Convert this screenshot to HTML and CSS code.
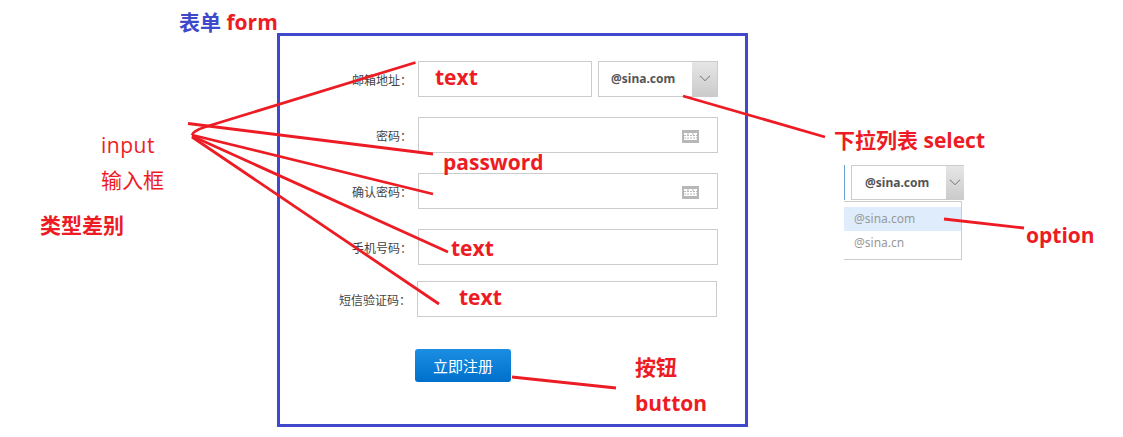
FILE: index.html
```html
<!DOCTYPE html>
<html lang="en">
<head>
  <meta charset="UTF-8">
  <meta name="viewport" content="width=device-width, initial-scale=1.0">
  <title>表单 form</title>
  <link rel="stylesheet" href="styles.css">
</head>
<body>
  <div class="page">
    <!-- the annotated form -->
    <form class="frame">
      <div class="row">
        <label class="row-label">邮箱地址：</label>
        <input class="input input-short" type="text">
        <div class="select">
          <span class="select-value">@sina.com</span>
          <span class="select-arrow">
            <svg width="12" height="8" viewBox="0 0 12 8"><path d="M1 2l5 5 5-5" fill="none" stroke="#fff" stroke-width="1"/><path d="M1 1l5 5 5-5" fill="none" stroke="#8f8f8f" stroke-width="1.2"/></svg>
          </span>
        </div>
      </div>
      <div class="row">
        <label class="row-label">密码：</label>
        <div class="input-wrap">
          <input class="input" type="password">
          <svg class="keyboard" width="17" height="13" viewBox="0 0 17 13">
            <rect width="17" height="13" fill="#b7b7b7"/>
            <rect x="2" y="3" width="13" height="7" fill="#fff"/>
            <path d="M2 5.5h13M2 8h13" stroke="#b7b7b7" stroke-width="1" stroke-dasharray="2 1"/>
            <path d="M6 3v2M11 3v2" stroke="#b7b7b7" stroke-width="1"/>
          </svg>
        </div>
      </div>
      <div class="row">
        <label class="row-label">确认密码：</label>
        <div class="input-wrap">
          <input class="input" type="password">
          <svg class="keyboard" width="17" height="13" viewBox="0 0 17 13">
            <rect width="17" height="13" fill="#b7b7b7"/>
            <rect x="2" y="3" width="13" height="7" fill="#fff"/>
            <path d="M2 5.5h13M2 8h13" stroke="#b7b7b7" stroke-width="1" stroke-dasharray="2 1"/>
            <path d="M6 3v2M11 3v2" stroke="#b7b7b7" stroke-width="1"/>
          </svg>
        </div>
      </div>
      <div class="row">
        <label class="row-label">手机号码：</label>
        <input class="input" type="text">
      </div>
      <div class="row row-code">
        <label class="row-label">短信验证码：</label>
        <input class="input" type="text">
      </div>
      <button class="submit" type="button">立即注册</button>
    </form>

    <!-- the select, shown open -->
    <div class="sample">
      <div class="sample-head">
        <div class="select select-open">
          <span class="select-value">@sina.com</span>
          <span class="select-arrow">
            <svg width="12" height="8" viewBox="0 0 12 8"><path d="M1 2l5 5 5-5" fill="none" stroke="#fff" stroke-width="1"/><path d="M1 1l5 5 5-5" fill="none" stroke="#8f8f8f" stroke-width="1.2"/></svg>
          </span>
        </div>
      </div>
      <ul class="options">
        <li class="option option-active">@sina.com</li>
        <li class="option">@sina.cn</li>
      </ul>
    </div>

    <!-- arrows drawn over the screenshot -->
    <svg class="lines" width="1123" height="437" viewBox="0 0 1123 437">
      <g fill="none" stroke="#ed1c24" stroke-width="2.8">
        <path d="M415.5 62.5L205 127Q193 131 192 135"/>
        <path d="M188 123.5L433 154"/>
        <path d="M192 135L433 194"/>
        <path d="M192 136L448 252"/>
        <path d="M192 137L439 304"/>
        <path d="M683 96L825 137"/>
        <path d="M512 377L616 388"/>
        <path d="M944 219L1024 228"/>
      </g>
    </svg>

    <span class="note note-form"><span class="note-blue">表单</span> <span class="note-red">form</span></span>
    <span class="note note-red note-t1">text</span>
    <span class="note note-red note-pw">password</span>
    <span class="note note-red note-t2">text</span>
    <span class="note note-red note-t3">text</span>
    <span class="note note-red note-select">下拉列表 select</span>
    <span class="note note-red note-option">option</span>
    <span class="note note-red note-btn1">按钮</span>
    <span class="note note-red note-btn2">button</span>
    <span class="note note-red note-diff">类型差别</span>
    <span class="note note-thin note-input">input</span>
    <span class="note note-thin note-inputcn">输入框</span>
  </div>
</body>
</html>
```

FILE: styles.css
```css
* {
  box-sizing: border-box;
}

body {
  margin: 0;
  background-color: #fff;
  font-family: "Liberation Sans", "Noto Sans CJK SC", sans-serif;
}

.page {
  position: relative;
  width: 1123px;
  height: 437px;
  padding: 33px 0 0 277px;
  overflow: hidden;
}

/* Form frame */
.frame {
  display: flex;
  flex-direction: column;
  width: 471px;
  height: 394px;
  padding-top: 25px;
  border: 3px solid #4048cc;
}

.row {
  display: flex;
  align-items: center;
  height: 36px;
  margin-bottom: 20px;
}

.row-code {
  margin-top: -4px;
  margin-left: -1px;
}

.row-label {
  width: 132px;
  margin-right: 6px;
  font-size: 12px;
  color: #444;
  text-align: right;
}

.input {
  width: 300px;
  height: 36px;
  padding: 0 10px;
  background-color: #fff;
  border: 1px solid #ccc;
  outline: none;
}

.input-short {
  width: 174px;
  margin-right: 6px;
}

.input-wrap {
  position: relative;
  display: flex;
}

.keyboard {
  position: absolute;
  top: 13px;
  right: 19px;
}

/* Select */
.select {
  display: flex;
  width: 120px;
  height: 36px;
  border: 1px solid #ccc;
}

.select-value {
  flex: 1;
  padding-left: 12px;
  font-family: "Noto Sans", sans-serif;
  font-size: 12px;
  font-weight: bold;
  line-height: 34px;
  color: #555;
}

.select-arrow {
  display: flex;
  align-items: center;
  justify-content: center;
  width: 25px;
  background: linear-gradient(#e6e6e6, #cbcbcb);
}

.submit {
  width: 96px;
  height: 33px;
  margin-top: 12px;
  margin-left: 135px;
  padding: 0;
  font-family: inherit;
  font-size: 15px;
  color: #fff;
  background: linear-gradient(#1b8ee2, #0070cc);
  border: none;
  border-radius: 3px;
}

/* Open select on the right */
.sample {
  position: absolute;
  top: 165px;
  left: 844px;
  width: 120px;
}

.sample-head {
  padding-left: 6px;
  border-left: 1px solid #6a9fd8;
}

.select-open {
  width: 113px;
  height: 35px;
  border-right: none;
}

.select-open .select-value {
  padding-left: 13px;
}

.select-open .select-arrow {
  width: 18px;
}

.options {
  width: 118px;
  height: 59px;
  margin: 1px 0 0;
  padding: 5px 0 0;
  list-style: none;
  border-top: 1px solid #ccc;
  border-right: 1px solid #ccc;
  border-bottom: 1px solid #ccc;
}

.option {
  height: 24px;
  padding-left: 10px;
  font-family: "Noto Sans", sans-serif;
  font-size: 12px;
  line-height: 24px;
  color: #999;
}

.option-active {
  background-color: #deecfb;
}

/* Annotations */
.lines {
  position: absolute;
  top: 0;
  left: 0;
}

.note {
  position: absolute;
  font-family: "Open Sans", "Noto Sans CJK SC", sans-serif;
  font-size: 21px;
  font-weight: bold;
  line-height: 28px;
  white-space: nowrap;
}

.note-red {
  color: #ed1c24;
}

.note-blue {
  color: #4048cc;
}

.note-thin {
  font-weight: normal;
  color: #ed1c24;
}

.note-form { left: 179px; top: 8px; }
.note-t1 { left: 435px; top: 63px; }
.note-pw { left: 443px; top: 148px; }
.note-t2 { left: 451px; top: 234px; }
.note-t3 { left: 459px; top: 283px; }
.note-select { left: 834px; top: 126px; }
.note-option { left: 1026px; top: 221px; }
.note-btn1 { left: 635px; top: 353px; }
.note-btn2 { left: 635px; top: 389px; }
.note-diff { left: 40px; top: 211px; }
.note-input { left: 101px; top: 131px; letter-spacing: 0.5px; }
.note-inputcn { left: 101px; top: 166px; }
```
